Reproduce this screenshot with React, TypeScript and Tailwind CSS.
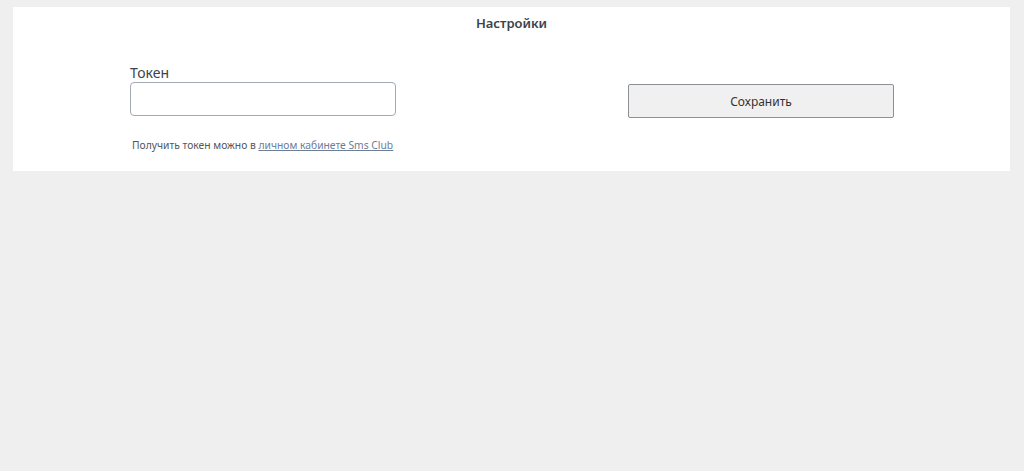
import React from "react";

// Страница настроек: токен Sms Club
export default function App() {
  return (
    <div
      className="min-h-[471px] w-full bg-[#efefef] pt-[7px] pl-[13px] pr-[14px]"
      style={{ fontFamily: '"Noto Sans", "Open Sans", sans-serif' }}
    >
      <div className="bg-white pb-[18px]">
        <h2 className="pt-[7px] text-center text-[13px] font-semibold leading-[18px] text-[#3c434a]">
          Настройки
        </h2>
        <div className="mt-[32px] flex justify-between pl-[117px] pr-[116px]">
          <div className="w-[266px]">
            <label className="block text-[14px] leading-[18px] text-[#3c434a]">Токен</label>
            <input
              type="text"
              className="mt-0 h-[34px] w-full rounded-[4px] border border-[#a3aab5] bg-white px-2 text-[13px] outline-none"
            />
          </div>
          <button className="mt-[20px] h-[34px] w-[266px] rounded-[2px] border border-[#8c8f94] bg-[#f0f0f0] pt-[2px] text-[12px] text-[#333]">
            Сохранить
          </button>
        </div>
        <p className="mt-[19px] pl-[119px] text-[10.3px] leading-[16px] text-[#50575e]">
          Получить токен можно в{" "}
          <a href="#" className="text-[#6c7d98] underline">
            личном кабинете Sms Club
          </a>
        </p>
      </div>
    </div>
  );
}
